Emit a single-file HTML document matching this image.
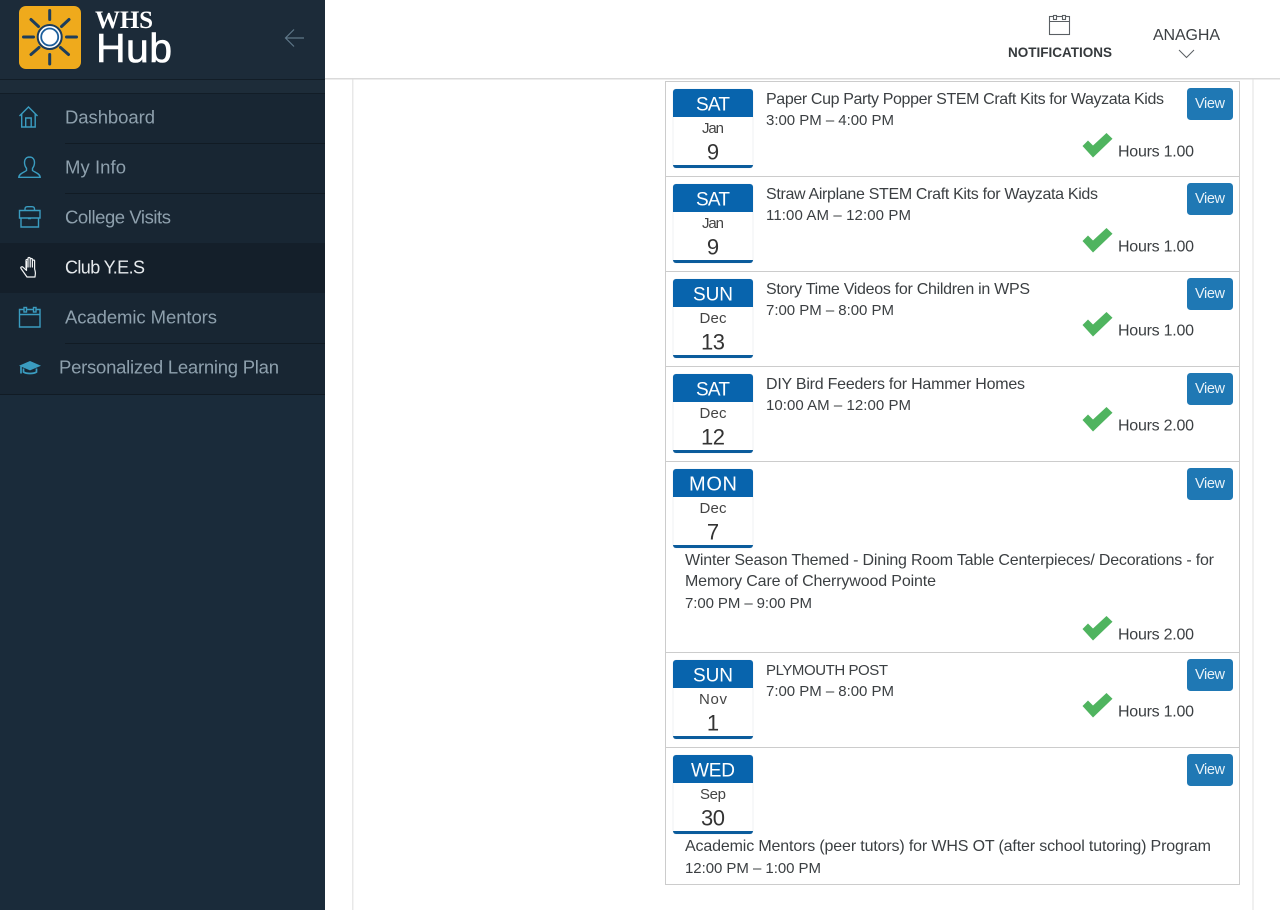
<!DOCTYPE html>
<html><head><meta charset="utf-8"><title>WHS Hub</title>
<style>
html,body{margin:0;padding:0;background:#fff;overflow:hidden}
svg{display:block;font-family:"Liberation Sans",sans-serif}
.t{font-size:16px;fill:#3b3f42}
.h{font-size:15px;fill:#3b3f42}
.n{font-size:18.500px;fill:#8ea0ad}
.d{font-size:19px;fill:#fff;text-anchor:middle}
.m{font-size:15px;fill:#444;text-anchor:middle}
.y{font-size:22px;fill:#333;text-anchor:middle}
.v{font-size:14.500px;fill:#e8f2f8;text-anchor:middle}
</style></head><body>
<svg width="1280" height="910" viewBox="0 0 1280 910" xmlns="http://www.w3.org/2000/svg">
<defs>
<g id="date"><rect x="673" y="89" width="80" height="79" rx="3" fill="#fff" stroke="#e4e8ec" stroke-width="0.6"/><path d="M673 117V92a3 3 0 0 1 3-3h74a3 3 0 0 1 3 3v25z" fill="#0864ad"/><path d="M673 165h80v0a3 3 0 0 1-3 3h-74a3 3 0 0 1-3-3z" fill="#0b5c9c"/></g>
<g id="btn"><rect x="1187" y="88" width="46" height="32" rx="3.500" fill="#1f78b4"/></g>
<path id="chk" d="M1082.500 146l5.500-5.500 5 5 13.500-12.500 6 5.800-19.500 18.700z" fill="#4fb45f"/>
</defs>

<rect width="1280" height="910" fill="#fff"/>
<rect x="352" y="78" width="1.500" height="832" fill="#e8e8e8"/>
<rect x="1252.500" y="78" width="1" height="832" fill="#e2e2e2"/>
<rect x="665.500" y="81.500" width="574" height="803" fill="#fff" stroke="#cccccc"/>
<g fill="#cccccc"><rect x="666" y="176" width="573" height="1"/><rect x="666" y="271" width="573" height="1"/><rect x="666" y="366" width="573" height="1"/><rect x="666" y="461" width="573" height="1"/><rect x="666" y="652" width="573" height="1"/><rect x="666" y="747" width="573" height="1"/></g>

<!-- top bar -->
<rect x="325" width="955" height="79" fill="#fff"/>
<rect x="325" y="78" width="955" height="1.500" fill="#dadada"/>
<g fill="none" stroke="#5a5f63" stroke-width="1.100"><rect x="1049.500" y="16.500" width="20" height="18"/><path d="M1049.500 21.500h20"/><rect x="1053.500" y="15.500" width="3" height="4" fill="#fff"/><rect x="1062.500" y="15.500" width="3" height="4" fill="#fff"/></g>
<text x="1008" y="57" font-size="13.500" font-weight="bold" fill="#35393c" textLength="104">NOTIFICATIONS</text>
<text x="1153" y="40" font-size="16" fill="#3c4043" textLength="67">ANAGHA</text>
<path d="M1179 50l7.500 7.500 7.500-7.500" fill="none" stroke="#5a5f63" stroke-width="1"/>

<!-- sidebar -->
<rect width="325" height="910" fill="#1a2b3a"/>
<rect width="325" height="79" fill="#1c2b39"/>
<rect y="79" width="325" height="1" fill="#121d27"/>
<rect y="80" width="325" height="13" fill="#1d2c39"/>
<rect y="93" width="325" height="301" fill="#182633"/>
<rect y="93" width="325" height="1" fill="#121d27"/>
<rect y="243" width="325" height="50" fill="#141f2a"/>
<rect y="394" width="325" height="1" fill="#111b24"/>
<g fill="#111b24"><rect x="65" y="143" width="260" height="1"/><rect x="65" y="193" width="260" height="1"/><rect x="65" y="343" width="260" height="1"/></g>

<!-- logo -->
<rect x="19" y="6" width="62" height="63" rx="7" fill="#efaa1c"/>
<g stroke="#1d3d5c" stroke-width="3" stroke-linecap="round" fill="none">
<path d="M49.700 10.500v9M49.700 54.500v9.500M23.500 37h10M66.500 37h10M31 19.500l7.500 7M69 19.500l-7.500 7M39 47.500l-8 7M60.500 47.500l8 7"/>
</g>
<circle cx="49.700" cy="37" r="12" fill="#fff" stroke="#1d3d5c" stroke-width="2"/>
<circle cx="49.700" cy="37" r="8.500" fill="#fff" stroke="#1d5f9c" stroke-width="1.800"/>
<circle cx="49.700" cy="37" r="6" fill="#fff"/>
<text x="95" y="28" font-family="'Liberation Serif',serif" font-weight="bold" font-size="25" fill="#fff" textLength="58">WHS</text>
<text x="96" y="62" font-size="41" fill="#fff" stroke="#fff" stroke-width="0.600" textLength="76">Hub</text>
<path d="M304 38h-18M294 29.500l-8.500 8.500 8.500 8.500" fill="none" stroke="#5f7889" stroke-width="1.200"/>

<!-- nav icons -->
<g fill="none" stroke="#3a9cc0" stroke-width="1.400">
<path d="M19.500 116l9-9 9 9M21.700 114v13h13.500v-13M25.700 127v-9h5.500v9"/>
<path d="M29.500 157c-3.200 0-5 2.300-5 5.500 0 2.700 1 4.500 2 5.800v2.200c-2 1.700-7.500 3-7.700 6.800h21.400c-.2-3.800-5.700-5.100-7.700-6.800v-2.200c1-1.300 2-3.100 2-5.800 0-3.200-1.800-5.500-5-5.500z"/>
<path d="M19.500 210.500h20.500v7.500H19.500zM21 218v9h17.500v-9M25 210.500v-1.500c0-1.500 1-2.300 2.500-2.300h4.500c1.500 0 2.500.8 2.500 2.300v1.500M28 218.500h3"/>
<path d="M19.500 309.500h20.500v17.500H19.500zM19.500 314.500h20.500"/>
<rect x="24" y="307.500" width="2.500" height="4.500" fill="#182633"/>
<rect x="33.500" y="307.500" width="2.500" height="4.500" fill="#182633"/>
</g>
<path d="M19 365.700l11-4.700 11 4.700-11 4.700z" fill="#3a9cc0"/>
<path d="M23.500 368.500v3.500c3 2 10 2 13 0v-3.500M21 366.500v7" fill="none" stroke="#3a9cc0" stroke-width="1.700"/>
<g fill="none" stroke="#f2f4f5" stroke-width="1.200" stroke-linecap="round" stroke-linejoin="round"><path d="M26 268v-7.500c0-1.300 2-1.300 2 0M28 267v-8.500c0-1.300 2.200-1.300 2.200 0v8.500M30.200 259.500c0-1.300 2.200-1.300 2.200 0V267M32.400 261c0-1.300 2.200-1.300 2.200 0v7.500c0 1.500 1 3 .8 5l-.4 3.500h-8l-6-8.500c-.8-1.400 1-2.300 2-1.300l3.500 3.300v-9"/></g>

<!-- nav text -->
<text class="n" x="65" y="123.500" textLength="90">Dashboard</text>
<text class="n" x="65" y="173.500" textLength="61">My Info</text>
<text class="n" x="65" y="223.500" textLength="106">College Visits</text>
<text class="n" x="65" y="273.500" textLength="80" style="fill:#e6eaed;font-size:18px">Club Y.E.S</text>
<text class="n" x="65" y="323.500" textLength="152">Academic Mentors</text>
<text class="n" x="59" y="373.500" textLength="220">Personalized Learning Plan</text>

<!-- row 1 -->
<use href="#date"/><use href="#btn"/><use href="#chk"/>
<text class="d" x="713" y="110.500" textLength="34">SAT</text><text class="m" x="713" y="133" textLength="22">Jan</text><text class="y" x="713" y="159.500">9</text>
<text class="v" x="1210" y="108" textLength="30">View</text>
<text class="t" x="766" y="104" textLength="398">Paper Cup Party Popper STEM Craft Kits for Wayzata Kids</text>
<text class="h" x="766" y="125" textLength="128">3:00 PM – 4:00 PM</text>
<text class="t" x="1118" y="156.500" textLength="76">Hours 1.00</text>

<!-- row 2 -->
<use href="#date" y="95"/><use href="#btn" y="95"/><use href="#chk" y="95"/>
<text class="d" x="713" y="205.500" textLength="34">SAT</text><text class="m" x="713" y="228" textLength="22">Jan</text><text class="y" x="713" y="254.500">9</text>
<text class="v" x="1210" y="203" textLength="30">View</text>
<text class="t" x="766" y="199" textLength="332">Straw Airplane STEM Craft Kits for Wayzata Kids</text>
<text class="h" x="766" y="220" textLength="145">11:00 AM – 12:00 PM</text>
<text class="t" x="1118" y="251.500" textLength="76">Hours 1.00</text>

<!-- row 3 -->
<use href="#date" y="190"/><use href="#btn" y="190"/><use href="#chk" y="179"/>
<text class="d" x="713" y="300.500" textLength="40">SUN</text><text class="m" x="713" y="323" textLength="27">Dec</text><text class="y" x="713" y="349.500" textLength="24">13</text>
<text class="v" x="1210" y="298" textLength="30">View</text>
<text class="t" x="766" y="294" textLength="264">Story Time Videos for Children in WPS</text>
<text class="h" x="766" y="315" textLength="128">7:00 PM – 8:00 PM</text>
<text class="t" x="1118" y="335.500" textLength="76">Hours 1.00</text>

<!-- row 4 -->
<use href="#date" y="285"/><use href="#btn" y="285"/><use href="#chk" y="274"/>
<text class="d" x="713" y="395.500" textLength="34">SAT</text><text class="m" x="713" y="418" textLength="27">Dec</text><text class="y" x="713" y="444.500" textLength="24">12</text>
<text class="v" x="1210" y="393" textLength="30">View</text>
<text class="t" x="766" y="389" textLength="259">DIY Bird Feeders for Hammer Homes</text>
<text class="h" x="766" y="410" textLength="145">10:00 AM – 12:00 PM</text>
<text class="t" x="1118" y="430.500" textLength="76">Hours 2.00</text>

<!-- row 5 -->
<use href="#date" y="380"/><use href="#btn" y="380"/><use href="#chk" y="483"/>
<text class="d" x="713" y="490.500" textLength="48" style="font-size:20px">MON</text><text class="m" x="713" y="513" textLength="27">Dec</text><text class="y" x="713" y="539.500">7</text>
<text class="v" x="1210" y="488" textLength="30">View</text>
<text class="t" x="685" y="565" textLength="529">Winter Season Themed - Dining Room Table Centerpieces/ Decorations - for</text>
<text class="t" x="685" y="586" textLength="251">Memory Care of Cherrywood Pointe</text>
<text class="h" x="685" y="608" textLength="127">7:00 PM – 9:00 PM</text>
<text class="t" x="1118" y="639.500" textLength="76">Hours 2.00</text>

<!-- row 6 -->
<use href="#date" y="571"/><use href="#btn" y="571"/><use href="#chk" y="560"/>
<text class="d" x="713" y="681.500" textLength="40">SUN</text><text class="m" x="713" y="704" textLength="28">Nov</text><text class="y" x="713" y="730.500">1</text>
<text class="v" x="1210" y="679" textLength="30">View</text>
<text class="h" x="766" y="675" textLength="122">PLYMOUTH POST</text>
<text class="h" x="766" y="696" textLength="128">7:00 PM – 8:00 PM</text>
<text class="t" x="1118" y="716.500" textLength="76">Hours 1.00</text>

<!-- row 7 -->
<use href="#date" y="666"/><use href="#btn" y="666"/>
<text class="d" x="713" y="776.500" textLength="44">WED</text><text class="m" x="713" y="799" textLength="26">Sep</text><text class="y" x="713" y="825.500" textLength="24">30</text>
<text class="v" x="1210" y="774" textLength="30">View</text>
<text class="t" x="685" y="851" textLength="526">Academic Mentors (peer tutors) for WHS OT (after school tutoring) Program</text>
<text class="h" x="685" y="873" textLength="136">12:00 PM – 1:00 PM</text>
</svg>
</body></html>
